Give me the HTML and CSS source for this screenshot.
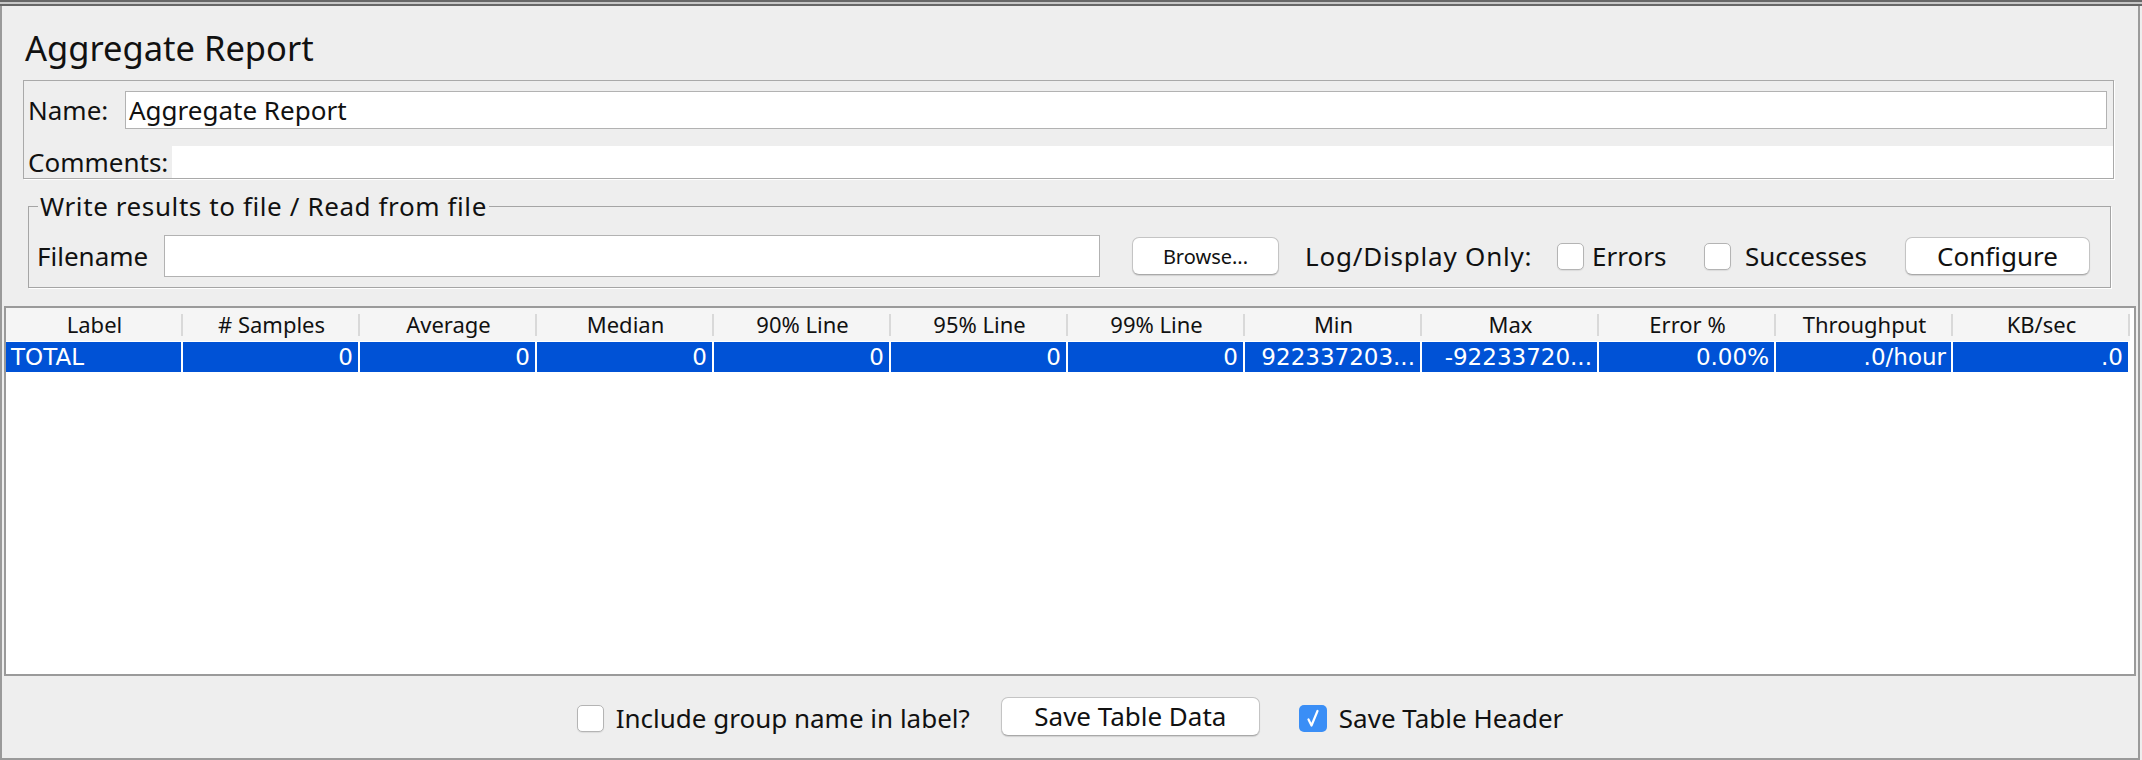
FILE: index.html
```html
<!DOCTYPE html>
<html>
<head>
<meta charset="utf-8">
<title>Aggregate Report</title>
<link rel="stylesheet" href="styles.css">
</head>
<body>
<div class="topbar"></div>
<div class="frame">
  <h1 class="title">Aggregate Report</h1>

  <div class="namepanel">
    <div class="namerow">
      <span class="lbl name-lbl">Name:</span>
      <div class="field name-field">Aggregate Report</div>
    </div>
    <div class="commentrow">
      <span class="lbl">Comments:</span>
      <div class="comments"></div>
    </div>
  </div>

  <fieldset class="filebox">
    <legend>Write results to file / Read from file</legend>
    <div class="filerow">
      <span class="lbl file-lbl">Filename</span>
      <div class="field file-field"></div>
      <button class="btn browse">Browse...</button>
      <span class="lbl log-lbl">Log/Display Only:</span>
      <span class="check"></span>
      <span class="lbl err-lbl">Errors</span>
      <span class="check"></span>
      <span class="lbl succ-lbl">Successes</span>
      <button class="btn configure">Configure</button>
    </div>
  </fieldset>

  <div class="table">
    <div class="thead">
      <div class="th">Label</div>
      <div class="th"># Samples</div>
      <div class="th">Average</div>
      <div class="th">Median</div>
      <div class="th">90% Line</div>
      <div class="th">95% Line</div>
      <div class="th">99% Line</div>
      <div class="th">Min</div>
      <div class="th">Max</div>
      <div class="th">Error %</div>
      <div class="th">Throughput</div>
      <div class="th">KB/sec</div>
    </div>
    <div class="trow">
      <div class="td left">TOTAL</div>
      <div class="td">0</div>
      <div class="td">0</div>
      <div class="td">0</div>
      <div class="td">0</div>
      <div class="td">0</div>
      <div class="td">0</div>
      <div class="td">922337203...</div>
      <div class="td">-92233720...</div>
      <div class="td">0.00%</div>
      <div class="td">.0/hour</div>
      <div class="td">.0</div>
    </div>
  </div>

  <div class="bottombar">
    <span class="check"></span>
    <span class="lbl inc-lbl">Include group name in label?</span>
    <button class="btn savedata">Save Table Data</button>
    <span class="check checked"><svg viewBox="0 0 28 27" width="28" height="27"><path d="M9.5 14.5 L12.5 20.5 L18.5 6" fill="none" stroke="#fff" stroke-width="2.2" stroke-linecap="round" stroke-linejoin="round"/></svg></span>
    <span class="lbl hdr-lbl">Save Table Header</span>
  </div>
</div>
</body>
</html>
```

FILE: styles.css
```css
* { box-sizing: border-box; }

html, body {
  margin: 0;
  padding: 0;
}

body {
  width: 2142px;
  height: 760px;
  overflow: hidden;
  background: #eeeeee;
  font-family: "Noto Sans", "DejaVu Sans", sans-serif;
  color: #111111;
}

.topbar {
  height: 6px;
  background: linear-gradient(#676767 0 2px, #c8c8c8 2px 4px, #676767 4px 6px);
}

.frame {
  width: 2140px;
  height: 754px;
  border-left: 2px solid #9a9a9a;
  border-right: 2px solid #9a9a9a;
  border-bottom: 2px solid #9a9a9a;
  background: #eeeeee;
  display: flex;
  flex-direction: column;
}

.title {
  margin: 20px 0 10px 23px;
  font-size: 34.5px;
  line-height: 44px;
  font-weight: normal;
  color: #111;
}

.lbl {
  font-size: 26px;
  white-space: nowrap;
  flex: none;
}

/* name / comments panel */
.namepanel {
  margin-left: 21px;
  width: 2091px;
  border: 1px solid #a9a9a9;
  box-shadow: 1px 1px 0 #ffffff;
  padding: 10px 0 0 4px;
}

.namerow {
  display: flex;
  align-items: center;
  height: 38px;
}

.name-lbl { width: 97px; }

.field {
  background: #ffffff;
  border: 1px solid #b2b2b2;
  font-size: 26px;
  line-height: 36px;
  padding-left: 3px;
  white-space: nowrap;
}

.name-field {
  flex: 1;
  height: 38px;
  margin-right: 6px;
}

.commentrow {
  display: flex;
  align-items: center;
  height: 32px;
  margin-top: 17px;
}

.comments {
  flex: 1;
  height: 32px;
  background: #ffffff;
  margin-left: 4px;
}

/* write results fieldset */
.filebox {
  margin: 10px 0 0 26px;
  width: 2083px;
  border: 1px solid #a5a5a5;
  box-shadow: 1px 1px 0 #ffffff;
  padding: 11px 0 10px 8px;
  min-inline-size: 0;
}

.filebox legend {
  font-size: 26px;
  line-height: 35px;
  letter-spacing: 0.6px;
  padding: 0 2px;
  margin-left: 1px;
}

.filerow {
  display: flex;
  align-items: center;
  height: 42px;
}

.file-lbl { width: 127px; }

.file-field {
  width: 936px;
  height: 42px;
  flex: none;
}

.btn {
  flex: none;
  background: #ffffff;
  border: 1px solid #c4c4c4;
  border-bottom-color: #a9a9a9;
  border-radius: 7px;
  box-shadow: 0 1px 1px rgba(0, 0, 0, 0.12);
  font-family: "Noto Sans", "DejaVu Sans", sans-serif;
  color: #111;
  padding: 0;
  text-align: center;
}

.browse {
  width: 147px;
  height: 38px;
  margin-left: 32px;
  font-size: 20px;
}

.log-lbl {
  width: 252px;
  margin-left: 26px;
  letter-spacing: 0.8px;
}

.check {
  flex: none;
  display: inline-block;
  width: 27px;
  height: 27px;
  background: #ffffff;
  border: 1px solid #b4b4b4;
  border-radius: 5px;
  box-shadow: 0 1px 1px rgba(0, 0, 0, 0.08);
}

.err-lbl { width: 112px; margin-left: 8px; }
.succ-lbl { width: 160px; margin-left: 14px; }

.configure {
  width: 185px;
  height: 38px;
  font-size: 26px;
}

/* table */
.table {
  margin: 18px 0 0 2px;
  width: 2132px;
  height: 370px;
  border: 2px solid #9a9a9a;
  background: #ffffff;
  flex: none;
}

.thead, .trow {
  display: grid;
  grid-template-columns: repeat(12, 177px);
}

.thead {
  height: 34px;
  padding-bottom: 1px;
}

.th {
  background: #f5f5f5 linear-gradient(#d9d9d9, #d9d9d9) right center / 2px 22px no-repeat;
  text-align: center;
  font-size: 22px;
  line-height: 33px;
  white-space: nowrap;
}

.trow { height: 30px; }

.td {
  background: #0052d6;
  border-right: 2px solid #ffffff;
  color: #ffffff;
  font-family: "DejaVu Sans", sans-serif;
  font-size: 23px;
  line-height: 31px;
  text-align: right;
  padding: 0 5px;
  white-space: nowrap;
  overflow: hidden;
}

.td.left { text-align: left; }

/* bottom controls */
.bottombar {
  flex: 1;
  display: flex;
  align-items: center;
  justify-content: center;
  padding-top: 2px;
}

.inc-lbl { margin-left: 12px; }

.savedata {
  width: 259px;
  height: 39px;
  font-size: 26px;
  margin-left: 31px;
  margin-top: -4px;
}

.check.checked {
  width: 28px;
  background: #3a8ef6;
  border: none;
  margin-left: 39px;
  box-shadow: none;
}

.check.checked svg { display: block; }

.hdr-lbl { margin-left: 12px; }
```
